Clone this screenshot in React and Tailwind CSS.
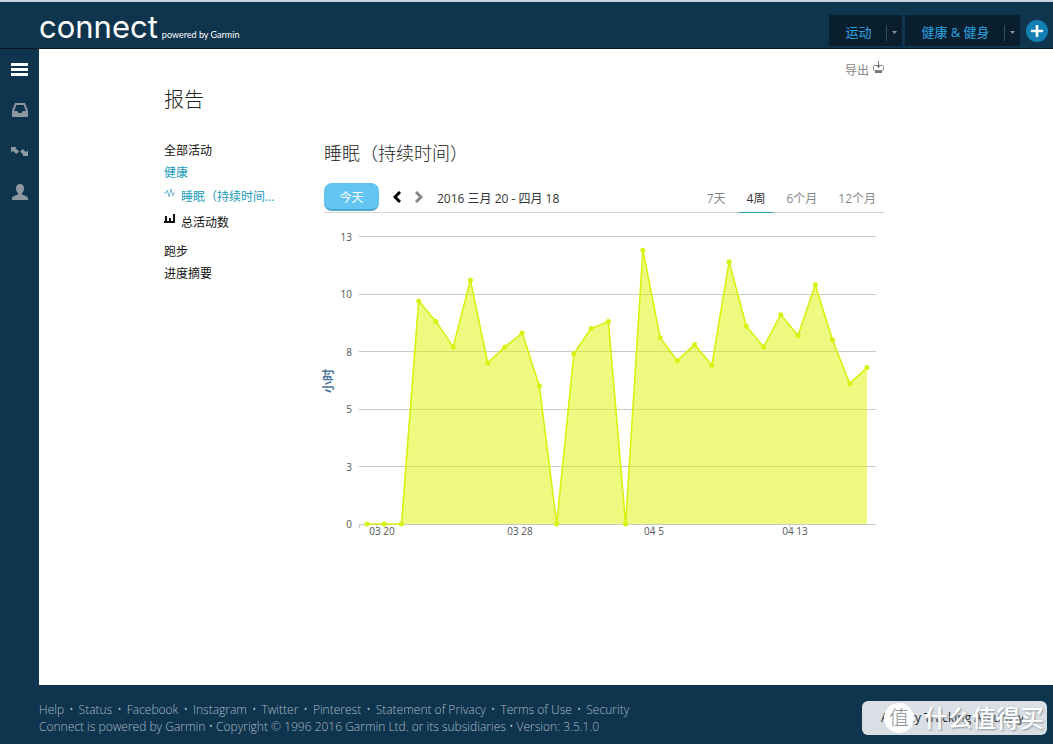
import React from 'react'
import { FaPlus } from 'react-icons/fa'

// Hours slept per night, starting at 03 19
const SLEEP = [
  0, 0, 0, 9.7, 8.8, 7.7, 10.6, 7, 7.7, 8.3,
  6, 0, 7.4, 8.5, 8.8, 0, 11.9, 8.1, 7.1, 7.8,
  6.9, 11.4, 8.6, 7.7, 9.1, 8.2, 10.4, 8, 6.1, 6.8,
]

const Y_TICKS = [
  { value: 12.5, label: '13' },
  { value: 10, label: '10' },
  { value: 7.5, label: '8' },
  { value: 5, label: '5' },
  { value: 2.5, label: '3' },
  { value: 0, label: '0' },
]

const X_TICKS = [
  { x: 52, label: '03 20', at: 58 },
  { x: 190, label: '03 28', at: 196 },
  { x: 328, label: '04 5', at: 330 },
  { x: 465, label: '04 13', at: 471 },
]

const RANGES = ['7天', '4周', '6个月', '12个月']

const FOOTER_LINKS = ['Help', 'Status', 'Facebook', 'Instagram', 'Twitter', 'Pinterest', 'Statement of Privacy', 'Terms of Use', 'Security']

const BASE_Y = 311
const px = (i) => 43 + (i * 500) / (SLEEP.length - 1)
const py = (v) => BASE_Y - v * 23

function SleepChart() {
  const line = SLEEP.map((v, i) => `${px(i).toFixed(1)},${py(v).toFixed(1)}`).join(' ')
  return (
    <svg viewBox="0 0 560 332" className="block w-full overflow-visible" role="img" aria-label="睡眠（持续时间）">
      {Y_TICKS.map((t) => (
        <g key={t.label}>
          <line x1="35" x2="552" y1={Math.floor(py(t.value)) + 0.5} y2={Math.floor(py(t.value)) + 0.5} stroke="#c8c8c8" />
          <text x="28" y={py(t.value) + 4} textAnchor="end" fontSize="10" fill="#555">{t.label}</text>
        </g>
      ))}
      <path d="M35.500 311v4" stroke="#c0d0e0" />
      {X_TICKS.map((t) => (
        <g key={t.label}>
          <line x1={t.x + 0.5} x2={t.x + 0.5} y1="311" y2="315" stroke="#c0d0e0" />
          <text x={t.at} y="322" textAnchor="middle" fontSize="10" fill="#555">{t.label}</text>
        </g>
      ))}
      <polygon points={`${px(0)},${BASE_Y} ${line} ${px(SLEEP.length - 1)},${BASE_Y}`} fill="#dbf300" fillOpacity="0.5" />
      <polyline points={line} fill="none" stroke="#d8f20f" strokeWidth="1.6" strokeLinejoin="round" />
      {SLEEP.map((v, i) => (
        <circle key={i} cx={px(i)} cy={py(v)} r="2.5" fill="#d8f20f" />
      ))}
      <text transform="translate(9 168) rotate(-90)" textAnchor="middle" fontSize="12" fontWeight="700" fill="#4d759e">小时</text>
    </svg>
  )
}

function TopTab({ label, className }) {
  return (
    <div className={`flex h-[31px] items-center bg-[#0a1f2e] pt-1 ${className}`}>
      <a href="#" className="flex-1 pl-0.5 text-center text-[13px] text-[#2ba3e3]">{label}</a>
      <button aria-label={`${label} 菜单`} className="flex h-4 w-4 items-center justify-center border-l border-[#35505f]">
        <svg width="5" height="3" viewBox="0 0 5 3"><path d="M0 0h5L2.500 3z" fill="#8b979f" /></svg>
      </button>
    </div>
  )
}

function Header() {
  return (
    <header className="flex h-[49px] items-start border-t-2 border-b border-t-[#c3d0dc] border-b-[#061620] pl-[39px] pr-[5px]">
      <a href="#" className="flex items-baseline gap-1 text-white">
        <span className="font-['Inter','Liberation_Sans',sans-serif] text-[31px] leading-[49px]">connect</span>
        <span className="font-['Lato',sans-serif] text-[9px]">powered by Garmin</span>
      </a>
      <div className="ml-auto flex items-center gap-[3px] pt-[13px]">
        <TopTab label="运动" className="w-[73px]" />
        <TopTab label="健康 & 健身" className="w-[115px]" />
        <button aria-label="添加" className="ml-[3px] flex h-[22px] w-[22px] items-center justify-center rounded-full bg-[#137fb2] text-white">
          <FaPlus size={14} />
        </button>
      </div>
    </header>
  )
}

function SideBar() {
  return (
    <nav className="flex w-[39px] shrink-0 flex-col items-center pt-[10px] text-[#8e999f]">
      <button aria-label="菜单" className="flex h-[20px] items-center">
        <svg width="17" height="13" viewBox="0 0 17 13"><path d="M0 0h17v3H0zM0 5h17v3H0zM0 10h17v3H0z" fill="#fff" /></svg>
      </button>
      <button aria-label="收件箱" className="mt-[21px] flex h-[20px] items-center">
        <svg width="16" height="14" viewBox="0 0 16 14">
          <path fillRule="evenodd" fill="currentColor" d="M3 0h10l3 8v5q0 1-1 1H1q-1 0-1-1V8zM4.200 2L2.200 8h3l1.300 2h3l1.300-2h3l-2-6z" />
        </svg>
      </button>
      <button aria-label="同步" className="mt-[21px] flex h-[20px] items-center">
        <svg width="17" height="9" viewBox="0 0 17 9">
          <path fill="currentColor" d="M0 0h5.500L4.600 1.200l3.400 3.200-2.600 2.700L2 3.900 0 5.500zM17 9h-5.500l.9-1.200-3.400-3.200 2.600-2.700L15 5.100l2-1.600z" />
        </svg>
      </button>
      <button aria-label="个人资料" className="mt-[21px] flex h-[20px] items-center">
        <svg width="16" height="16" viewBox="0 0 16 16">
          <path fill="currentColor" d="M8 0c2.600 0 4 1.800 4 4.300 0 2.200-.9 4-2 5v1.200c2.200.9 6 1.500 6 4V16H0v-1.500c0-2.500 3.800-3.100 6-4V9.300c-1.100-1-2-2.800-2-5C4 1.800 5.400 0 8 0z" />
        </svg>
      </button>
    </nav>
  )
}

function ReportNav() {
  return (
    <ul className="w-40 shrink-0 pt-px text-xs text-[#111]">
      <li className="h-[22px] leading-[22px]"><a href="#">全部活动</a></li>
      <li className="h-[22px] leading-[22px] text-[#1a9cba]"><a href="#">健康</a></li>
      <li className="h-[26px] leading-[26px] text-[#1a9cba]">
        <a href="#" className="flex gap-1.5">
          <svg width="11" height="10" viewBox="0 0 12 10" className="mt-1 shrink-0">
            <path d="M0 5h2l1.500-3L5.500 9l2-8.500L9.500 8l1-3H12" fill="none" stroke="#6fb0d0" />
          </svg>
          <span className="whitespace-nowrap">睡眠（持续时间...</span>
        </a>
      </li>
      <li className="h-[26px] leading-[26px]">
        <a href="#" className="flex gap-1.5">
          <svg width="11" height="9" viewBox="0 0 11 9" className="mt-1 shrink-0">
            <path d="M0 7h11v2H0zM1 2h2v5H1zM5 4h2v3H5zM9 0h2v7H9z" fill="#111" />
          </svg>
          <span>总活动数</span>
        </a>
      </li>
      <li className="mt-[5px] h-[22px] leading-[22px]"><a href="#">跑步</a></li>
      <li className="h-[22px] leading-[22px]"><a href="#">进度摘要</a></li>
    </ul>
  )
}

function Chevron({ d }) {
  return (
    <svg width="8" height="12" viewBox="0 0 8 12">
      <path d={d} fill="none" stroke="currentColor" strokeWidth="3" />
    </svg>
  )
}

function Toolbar() {
  return (
    <div className="mt-3.5 flex h-8 items-center border-b border-[#d4d4d4]">
      <button className="h-7 w-[55px] rounded-lg border-b-2 border-[#4ba7d0] bg-[#62c5f1] pt-1 text-xs text-white">今天</button>
      <button aria-label="上一页" className="ml-3.5 text-black"><Chevron d="M7 1L2 6l5 5" /></button>
      <button aria-label="下一页" className="ml-3.5 text-[#888]"><Chevron d="M1 1l5 5-5 5" /></button>
      <span className="ml-3.5 pt-1 whitespace-nowrap text-xs text-[#333]">2016 三月 20 - 四月 18</span>
      <div className="ml-auto flex gap-[5px] self-stretch text-xs">
        {RANGES.map((r) => (
          <button
            key={r}
            className={`-mb-px px-2 pt-1 whitespace-nowrap ${r === '4周' ? 'border-b border-[#2a9cb4] text-[#333]' : 'text-[#888]'}`}
          >
            {r}
          </button>
        ))}
      </div>
    </div>
  )
}

function Footer() {
  return (
    <footer className="flex items-start justify-between pt-4 pr-1.5 pb-[9px] pl-[39px] text-xs leading-[17px] font-light text-[#a9bac5]">
      <div>
        <p>
          {FOOTER_LINKS.map((l, i) => (
            <React.Fragment key={l}>
              {i > 0 && <span className="mx-[5px]">•</span>}
              <a href="#">{l}</a>
            </React.Fragment>
          ))}
        </p>
        <p>Connect is powered by Garmin • Copyright © 1996 2016 Garmin Ltd. or its subsidiaries • Version: 3.5.1.0</p>
      </div>
      <div className="relative">
        <button className="h-[34px] w-[185px] rounded-md bg-[#d9dfe4] pr-1 text-xs font-normal text-[#222]">Activity Tracking Accuracy</button>
        <div className="pointer-events-none absolute inset-0 flex items-center gap-2.5 pl-[22px]">
          <span className="flex h-[30px] w-[30px] shrink-0 items-center justify-center rounded-full bg-white text-xl text-[#8b9298]">值</span>
          <span className="text-2xl font-medium whitespace-nowrap text-white [text-shadow:1px_1px_2px_#8b9298]">什么值得买</span>
        </div>
      </div>
    </footer>
  )
}

export default function App() {
  return (
    <div className="flex min-h-screen flex-col bg-[#0f344d] font-['Open_Sans','Noto_Sans_CJK_SC',sans-serif]">
      <Header />
      <div className="flex flex-1">
        <SideBar />
        <main className="min-w-0 flex-1 bg-white pt-3 pr-[169px] pl-[125px]">
          <div className="flex justify-end">
            <button className="flex h-5 gap-1 text-xs leading-5 text-[#888]">
              导出
              <svg width="11" height="13" viewBox="0 0 11 13">
                <path d="M4 4.500H1.500q-1 0-1 1v3q0 1 1 1h8q1 0 1-1v-3q0-1-1-1H7" fill="none" stroke="#888" />
                <path d="M5 0h1v4h2L5.500 7 3 4h2zM2 10h7v2H2z" fill="#777" />
              </svg>
            </button>
          </div>
          <h1 className="mt-[5px] text-xl leading-7 font-light text-[#222]">报告</h1>
          <div className="mt-[25px] flex">
            <ReportNav />
            <section className="min-w-0 flex-1">
              <h2 className="text-lg leading-7 font-light text-[#222]">睡眠（持续时间）</h2>
              <Toolbar />
              <SleepChart />
            </section>
          </div>
        </main>
      </div>
      <Footer />
    </div>
  )
}
